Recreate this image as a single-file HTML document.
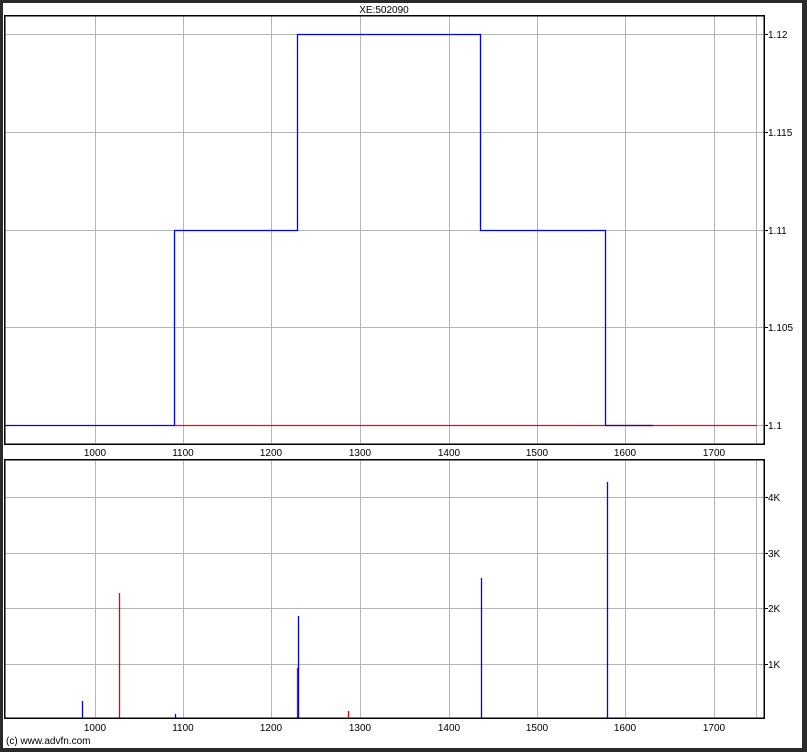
<!DOCTYPE html>
<html><head><meta charset="utf-8"><style>
html,body{margin:0;padding:0;background:#2a2a2a;width:807px;height:752px;overflow:hidden}
svg{display:block}
text{font-family:"Liberation Sans",sans-serif;font-size:10px;fill:#000}
</style></head><body>
<svg width="807" height="752" viewBox="0 0 807 752">
<rect x="0" y="0" width="807" height="752" fill="#2a2a2a"/>
<rect x="3" y="3" width="799" height="745" fill="#fff"/>
<text x="384" y="13" text-anchor="middle">XE:502090</text>
<g stroke="#b4b8b4" stroke-width="1">
<line x1="95.5" y1="16" x2="95.5" y2="444"/><line x1="183.5" y1="16" x2="183.5" y2="444"/>
<line x1="271.5" y1="16" x2="271.5" y2="444"/><line x1="360.5" y1="16" x2="360.5" y2="444"/>
<line x1="449.5" y1="16" x2="449.5" y2="444"/><line x1="537.5" y1="16" x2="537.5" y2="444"/>
<line x1="625.5" y1="16" x2="625.5" y2="444"/><line x1="714.5" y1="16" x2="714.5" y2="444"/>
<line x1="756.5" y1="16" x2="756.5" y2="444"/>
<line x1="5" y1="34.5" x2="764" y2="34.5"/><line x1="5" y1="132.5" x2="764" y2="132.5"/>
<line x1="5" y1="230.5" x2="764" y2="230.5"/><line x1="5" y1="327.5" x2="764" y2="327.5"/>
<line x1="5" y1="425.5" x2="764" y2="425.5"/>
<line x1="95.5" y1="460" x2="95.5" y2="718"/><line x1="183.5" y1="460" x2="183.5" y2="718"/>
<line x1="271.5" y1="460" x2="271.5" y2="718"/><line x1="360.5" y1="460" x2="360.5" y2="718"/>
<line x1="449.5" y1="460" x2="449.5" y2="718"/><line x1="537.5" y1="460" x2="537.5" y2="718"/>
<line x1="625.5" y1="460" x2="625.5" y2="718"/><line x1="714.5" y1="460" x2="714.5" y2="718"/>
<line x1="756.5" y1="460" x2="756.5" y2="718"/>
<line x1="5" y1="497.5" x2="764" y2="497.5"/><line x1="5" y1="553.5" x2="764" y2="553.5"/>
<line x1="5" y1="608.5" x2="764" y2="608.5"/><line x1="5" y1="664.5" x2="764" y2="664.5"/>
</g>
<line x1="174" y1="425.5" x2="757" y2="425.5" stroke="#f00" stroke-width="1.3"/>
<polyline fill="none" stroke="#00f" stroke-width="1.3" points="5,425.5 174.5,425.5 174.5,230.5 297.5,230.5 297.5,34.5 480.5,34.5 480.5,230.5 605.5,230.5 605.5,425.5 653,425.5"/>
<g stroke-width="1.3">
<line x1="82.5" y1="701" x2="82.5" y2="718" stroke="#00f"/>
<line x1="119.5" y1="593" x2="119.5" y2="718" stroke="#e00"/>
<line x1="175.5" y1="714" x2="175.5" y2="718" stroke="#00f"/>
<line x1="297.5" y1="668" x2="297.5" y2="718" stroke="#e00"/>
<line x1="298.5" y1="616" x2="298.5" y2="718" stroke="#00f"/>
<line x1="348.5" y1="711" x2="348.5" y2="718" stroke="#e00"/>
<line x1="481.5" y1="578" x2="481.5" y2="718" stroke="#00f"/>
<line x1="607.5" y1="482" x2="607.5" y2="718" stroke="#00f"/>
</g>
<g fill="none" stroke="#000" stroke-width="1.5">
<rect x="4.75" y="15.75" width="759.5" height="428.5"/>
<rect x="4.75" y="459.75" width="759.5" height="258.5"/>
</g>
<g stroke="#000" stroke-width="1">
<line x1="764" y1="34.5" x2="768" y2="34.5"/><line x1="764" y1="132.5" x2="768" y2="132.5"/>
<line x1="764" y1="230.5" x2="768" y2="230.5"/><line x1="764" y1="327.5" x2="768" y2="327.5"/>
<line x1="764" y1="425.5" x2="768" y2="425.5"/>
<line x1="764" y1="497.5" x2="768" y2="497.5"/><line x1="764" y1="553.5" x2="768" y2="553.5"/>
<line x1="764" y1="608.5" x2="768" y2="608.5"/><line x1="764" y1="664.5" x2="768" y2="664.5"/>
</g>
<g>
<text x="768" y="38">1.12</text><text x="768" y="136">1.115</text>
<text x="768" y="234">1.11</text><text x="768" y="331">1.105</text>
<text x="768" y="429">1.1</text>
<text x="768" y="501">4K</text><text x="768" y="557">3K</text>
<text x="768" y="612">2K</text><text x="768" y="668">1K</text>
</g>
<g text-anchor="middle">
<text x="95" y="456">1000</text><text x="183" y="456">1100</text><text x="271" y="456">1200</text>
<text x="360" y="456">1300</text><text x="449" y="456">1400</text><text x="537" y="456">1500</text>
<text x="625" y="456">1600</text><text x="714" y="456">1700</text>
<text x="95" y="731">1000</text><text x="183" y="731">1100</text><text x="271" y="731">1200</text>
<text x="360" y="731">1300</text><text x="449" y="731">1400</text><text x="537" y="731">1500</text>
<text x="625" y="731">1600</text><text x="714" y="731">1700</text>
</g>
<text x="6" y="744">(c) www.advfn.com</text>
</svg>
</body></html>
